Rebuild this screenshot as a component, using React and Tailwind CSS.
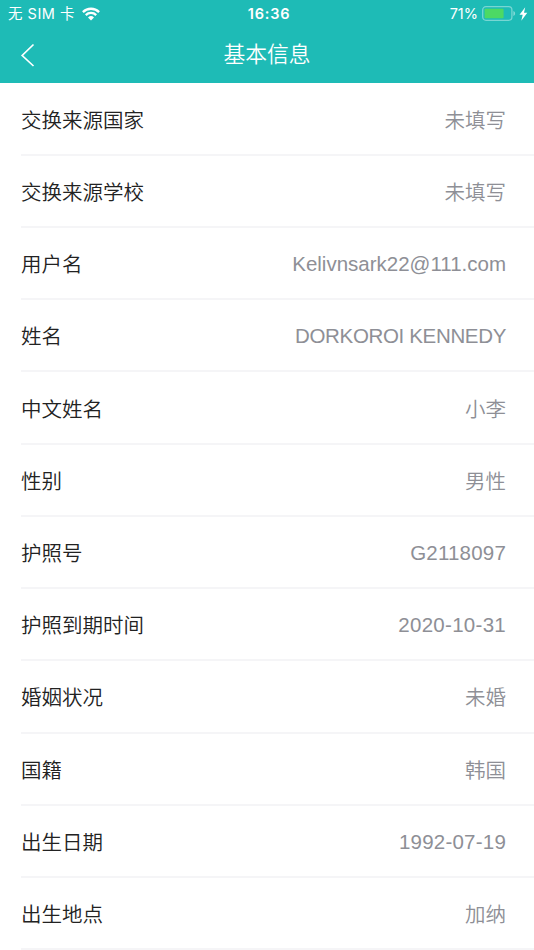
const rows = [
    { label: '交换来源国家', value: '未填写' },
    { label: '交换来源学校', value: '未填写' },
    { label: '用户名', value: 'Kelivnsark22@111.com', spacing: 'pb-0.5' },
    { label: '姓名', value: 'DORKOROI KENNEDY', spacing: 'pb-0.5 tracking-[-0.34px]' },
    { label: '中文姓名', value: '小李' },
    { label: '性别', value: '男性' },
    { label: '护照号', value: 'G2118097', spacing: 'pb-0.5 tracking-[0.2px]' },
    { label: '护照到期时间', value: '2020-10-31', spacing: 'pb-0.5 tracking-[0.28px]' },
    { label: '婚姻状况', value: '未婚' },
    { label: '国籍', value: '韩国' },
    { label: '出生日期', value: '1992-07-19', spacing: 'pb-0.5 tracking-[0.22px]' },
    { label: '出生地点', value: '加纳' },
]

function StatusBar() {
    return (
        <div className="grid grid-cols-[1fr_auto_1fr] items-center h-7 pl-2 pr-1.5 font-['Inter','Noto_Sans_CJK_SC',sans-serif] text-[14.5px] leading-7">
            <div className="flex items-center gap-[7px]">
                <span className="whitespace-nowrap tracking-[0.5px]">无 SIM 卡</span>
                <svg className="-mt-px" width="18" height="14" viewBox="0 0 18 14" fill="none" stroke="currentColor" strokeWidth="2.3">
                    <path d="M0.9 5.1a11.5 11.5 0 0 1 16.2 0" />
                    <path d="M3.8 8.1a7.4 7.4 0 0 1 10.4 0" />
                    <path d="M9 13.4 6 10.4a4.3 4.3 0 0 1 6 0z" fill="currentColor" stroke="none" />
                </svg>
            </div>
            <span className="pl-0.5 font-semibold tracking-[0.8px]">16:36</span>
            <div className="flex items-center justify-end">
                <span className="mr-1">71%</span>
                <svg className="-mt-[2px]" width="34" height="15" viewBox="0 0 34 15">
                    <rect x="0.7" y="0.7" width="29.2" height="13.6" rx="3.2" fill="none" stroke="#fff" strokeOpacity="0.4" strokeWidth="1.3" />
                    <rect x="2.6" y="2.8" width="19" height="9.4" rx="0.8" fill="#4cd964" />
                    <path d="M31.4 5v5c1.1-.4 1.7-1.4 1.7-2.5S32.5 5.4 31.4 5z" fill="#fff" fillOpacity="0.45" />
                </svg>
                <svg className="ml-[3px] -mt-px" width="9" height="14" viewBox="0 0 9 14" fill="currentColor">
                    <path d="M6.2 0.3 0.5 7.8h3.2L2.3 13.7 8.3 5.8H5z" />
                </svg>
            </div>
        </div>
    )
}

export default function App() {
    return (
        <div className="h-[950px] w-[534px] overflow-hidden bg-white font-['Liberation_Sans','Noto_Sans_CJK_SC',sans-serif]">
            <header className="h-[82.6px] bg-[#1ebbb6] text-white">
                <StatusBar />
                <div className="grid grid-cols-[1fr_auto_1fr] items-center h-[54px]">
                    <button className="pl-5 w-fit" aria-label="返回">
                        <svg width="16" height="24" viewBox="0 0 16 24" fill="none" stroke="currentColor" strokeWidth="1.7">
                            <path d="M13.5 1.5 2.2 12.5 13.5 23" />
                        </svg>
                    </button>
                    <h1 className="pb-[3px] text-[21.8px] font-[350] font-['Noto_Sans_CJK_SC',sans-serif]">基本信息</h1>
                </div>
            </header>

            <ul className="mt-[0.9px] pl-[21px]">
                {rows.map(({ label, value, spacing }) => (
                    <li key={label} className="flex items-center justify-between h-[72.24px] pt-1 pr-7 border-b-2 border-[#f5f5f7] text-[20.5px] leading-8 font-[350]">
                        <span className="text-[#222]">{label}</span>
                        <span className={`text-[#8e8f96] ${spacing || ''}`}>{value}</span>
                    </li>
                ))}
            </ul>
        </div>
    )
}
